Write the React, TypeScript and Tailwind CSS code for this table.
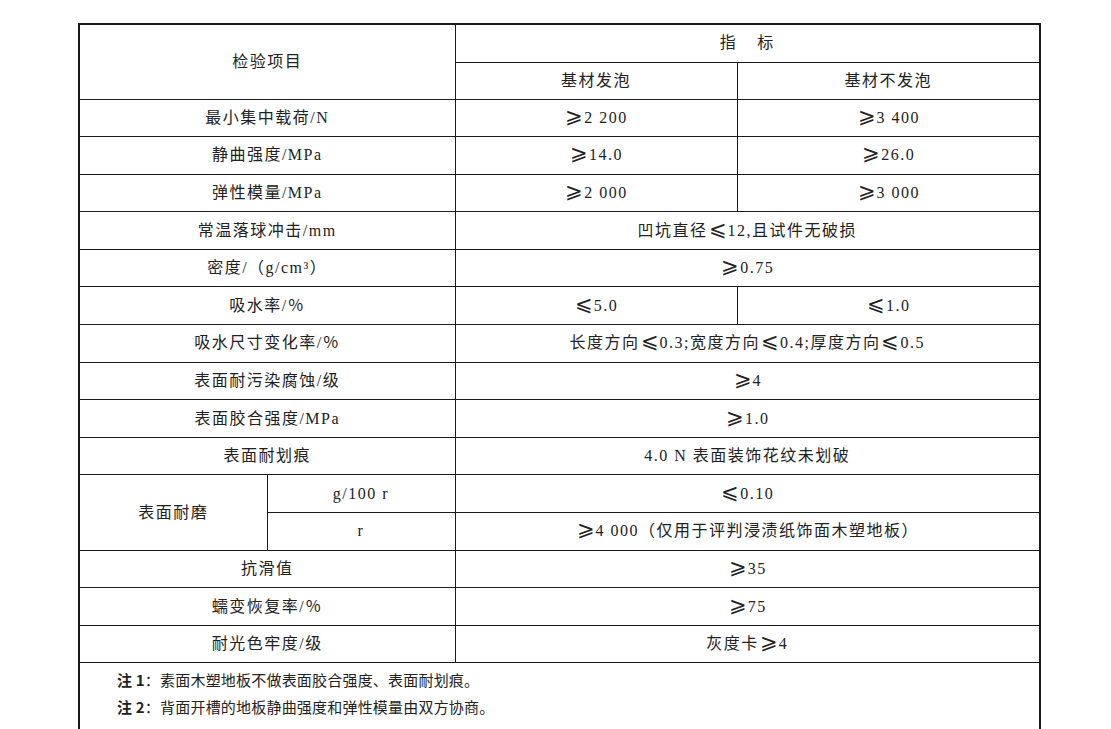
import React from 'react';

type Row =
  | { name: string; a: string; b: string }
  | { name: string; both: string };

const rows: Row[] = [
  { name: '最小集中载荷/N', a: '⩾2 200', b: '⩾3 400' },
  { name: '静曲强度/MPa', a: '⩾14.0', b: '⩾26.0' },
  { name: '弹性模量/MPa', a: '⩾2 000', b: '⩾3 000' },
  { name: '常温落球冲击/mm', both: '凹坑直径⩽12,且试件无破损' },
  { name: '密度/（g/cm³）', both: '⩾0.75' },
  { name: '吸水率/％', a: '⩽5.0', b: '⩽1.0' },
  { name: '吸水尺寸变化率/％', both: '长度方向⩽0.3;宽度方向⩽0.4;厚度方向⩽0.5' },
  { name: '表面耐污染腐蚀/级', both: '⩾4' },
  { name: '表面胶合强度/MPa', both: '⩾1.0' },
  { name: '表面耐划痕', both: '4.0 N 表面装饰花纹未划破' },
];

const tailRows: Row[] = [
  { name: '抗滑值', both: '⩾35' },
  { name: '蠕变恢复率/％', both: '⩾75' },
  { name: '耐光色牢度/级', both: '灰度卡⩾4' },
];

const cell = 'border border-[#1a1a1a] p-0 text-center align-middle';

// the comparison signs are drawn wider in the source, so blow them up a bit
function Val({ text }: { text: string }) {
  const parts = text.split(/([⩾⩽])/);
  return (
    <>
      {parts.map((p, i) =>
        p === '⩾' || p === '⩽' ? (
          <span key={i} className="text-[21px] leading-[0] tracking-normal font-light mx-[1px]">
            {p}
          </span>
        ) : (
          <span key={i}>{p}</span>
        )
      )}
    </>
  );
}

function DataRow({ row }: { row: Row }) {
  return (
    <tr className="h-[37.6px]">
      <td colSpan={2} className={cell}>
        {row.name}
      </td>
      {'both' in row ? (
        <td colSpan={2} className={cell}>
          <Val text={row.both} />
        </td>
      ) : (
        <>
          <td className={cell}>
            <Val text={row.a} />
          </td>
          <td className={cell}>
            <Val text={row.b} />
          </td>
        </>
      )}
    </tr>
  );
}

export default function App() {
  return (
    <div
      className="min-h-[729px] bg-white pt-[23px] pl-[78px] text-[#222] overflow-hidden"
      style={{ fontFamily: '"Liberation Serif", "Noto Sans CJK SC", "DejaVu Sans", serif' }}
    >
      <table className="border-collapse table-fixed w-[961px] border-2 border-[#1a1a1a] text-[16px] leading-none tracking-[1.5px]">
        <colgroup>
          <col className="w-[188px]" />
          <col className="w-[188px]" />
          <col className="w-[282px]" />
          <col className="w-[303px]" />
        </colgroup>
        <tbody>
          <tr className="h-[38px]">
            <td rowSpan={2} colSpan={2} className={cell}>
              检验项目
            </td>
            <td colSpan={2} className={cell}>
              <span>指</span>
              <span className="ml-[20px]">标</span>
            </td>
          </tr>
          <tr className="h-[37px]">
            <td className={cell}>基材发泡</td>
            <td className={cell}>基材不发泡</td>
          </tr>
          {rows.map((row) => (
            <DataRow key={row.name} row={row} />
          ))}
          <tr className="h-[37.6px]">
            <td rowSpan={2} className={cell}>
              表面耐磨
            </td>
            <td className={cell}>g/100 r</td>
            <td colSpan={2} className={cell}>
              <Val text="⩽0.10" />
            </td>
          </tr>
          <tr className="h-[37.6px]">
            <td className={cell}>r</td>
            <td colSpan={2} className={cell}>
              <Val text="⩾4 000（仅用于评判浸渍纸饰面木塑地板）" />
            </td>
          </tr>
          {tailRows.map((row) => (
            <DataRow key={row.name} row={row} />
          ))}
          <tr className="h-[80px]">
            <td
              colSpan={4}
              className="border border-[#1a1a1a] pl-[37px] pt-[3px] text-left align-top text-[15px] leading-[27px] tracking-[0.2px]"
              style={{ fontFamily: '"Noto Sans CJK SC", sans-serif' }}
            >
              <div>
                <span className="font-bold">注 1</span>：素面木塑地板不做表面胶合强度、表面耐划痕。
              </div>
              <div>
                <span className="font-bold">注 2</span>：背面开槽的地板静曲强度和弹性模量由双方协商。
              </div>
            </td>
          </tr>
        </tbody>
      </table>
    </div>
  );
}
